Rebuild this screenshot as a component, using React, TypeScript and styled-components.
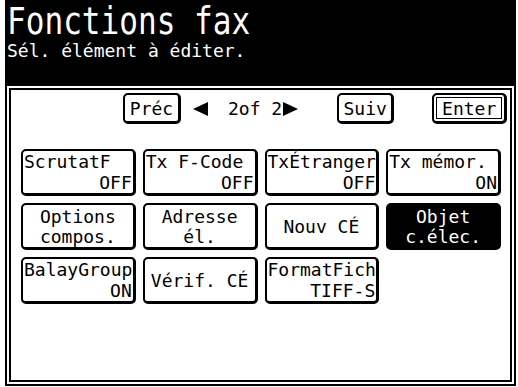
import styled, { createGlobalStyle } from 'styled-components';

const GlobalStyle = createGlobalStyle`
  html, body {
    margin: 0;
    padding: 0;
    background: #fff;
  }
  body {
    width: 518px;
    height: 387px;
    overflow: hidden;
    font-family: 'DejaVu Sans Mono', 'Liberation Mono', monospace;
    color: #000;
  }
`;

const Page = styled.div`
  width: 518px;
  height: 387px;
  padding: 0 2px 1px 5px;
  box-sizing: border-box;
`;

const Screen = styled.div`
  height: 386px;
  border: 2px solid #000;
  border-top: none;
  display: flex;
  flex-direction: column;
  box-sizing: border-box;
  background: #fff;
`;

const Header = styled.header`
  background: #000;
  color: #fff;
  height: 86px;
  padding: 7px 0 0 0;
  box-sizing: border-box;
  overflow: hidden;
`;

const Title = styled.div`
  font-size: 37px;
  line-height: 30px;
  white-space: nowrap;
  transform: scaleX(0.84);
  transform-origin: left center;
`;

const Subtitle = styled.div`
  font-size: 18px;
  line-height: 20px;
  margin-top: 4px;
  white-space: nowrap;
`;

const Panel = styled.section`
  flex: 1;
  margin: 2px;
  border: 2px solid #000;
  display: flex;
  flex-direction: column;
  box-sizing: border-box;
`;

const NavRow = styled.div`
  display: flex;
  align-items: center;
  height: 31px;
  margin-top: 3px;
  padding-left: 112px;
`;

const NavButton = styled.div<{ $double?: boolean; $gap?: number; $w: number }>`
  width: ${(p) => p.$w}px;
  height: 100%;
  margin-left: ${(p) => p.$gap ?? 0}px;
  box-sizing: border-box;
  display: flex;
  align-items: center;
  justify-content: center;
  font-size: 18px;
  border: 2px solid #000;
  border-right-width: 3px;
  border-bottom-width: 3px;
  border-radius: 5px;
  box-shadow: ${(p) =>
    p.$double ? 'inset 0 0 0 2px #fff, inset 0 0 0 3px #000' : 'none'};
`;

const PageInfo = styled.span<{ $gap: number }>`
  margin-left: ${(p) => p.$gap}px;
  font-size: 18px;
  white-space: pre;
  display: flex;
  align-items: center;
`;

const Arrow = styled.svg<{ $gap?: number }>`
  margin-left: ${(p) => p.$gap ?? 0}px;
  display: block;
`;

const Grid = styled.div`
  display: grid;
  grid-template-columns: repeat(4, 1fr);
  grid-auto-rows: 47px;
  column-gap: 7px;
  row-gap: 7px;
  margin-top: 25px;
  padding: 0 9px 0 10px;
`;

const Key = styled.div<{ $active?: boolean; $center?: boolean }>`
  box-sizing: border-box;
  border: 2px solid #000;
  border-right-width: 3px;
  border-bottom-width: 3px;
  border-radius: 5px;
  background: ${(p) => (p.$active ? '#000' : '#fff')};
  color: ${(p) => (p.$active ? '#fff' : '#000')};
  font-size: 18px;
  line-height: 20px;
  padding: 1px 1px 0 1px;
  display: flex;
  flex-direction: column;
  justify-content: ${(p) => (p.$center ? 'center' : 'space-between')};
  text-align: ${(p) => (p.$center ? 'center' : 'left')};
  white-space: nowrap;
  overflow: hidden;
`;

const Value = styled.span`
  text-align: right;
`;

type Item =
  | { kind: 'split'; label: string; value: string }
  | { kind: 'center'; lines: string[]; active?: boolean }
  | { kind: 'empty' };

const items: Item[] = [
  { kind: 'split', label: 'ScrutatF', value: 'OFF' },
  { kind: 'split', label: 'Tx F-Code', value: 'OFF' },
  { kind: 'split', label: 'TxÉtranger', value: 'OFF' },
  { kind: 'split', label: 'Tx mémor.', value: 'ON' },
  { kind: 'center', lines: ['Options', 'compos.'] },
  { kind: 'center', lines: ['Adresse', 'él.'] },
  { kind: 'center', lines: ['Nouv CÉ'] },
  { kind: 'center', lines: ['Objet', 'c.élec.'], active: true },
  { kind: 'split', label: 'BalayGroup', value: 'ON' },
  { kind: 'center', lines: ['Vérif. CÉ'] },
  { kind: 'split', label: 'FormatFich', value: 'TIFF-S' },
  { kind: 'empty' },
];

function App() {
  return (
    <Page>
      <GlobalStyle />
      <Screen>
        <Header>
          <Title>Fonctions fax</Title>
          <Subtitle>Sél. élément à éditer.</Subtitle>
        </Header>
        <Panel>
          <NavRow>
            <NavButton $w={58}>Préc</NavButton>
            <Arrow $gap={12} width="15" height="14" viewBox="0 0 15 14">
              <polygon points="0,7 15,0 15,14" fill="#000" />
            </Arrow>
            <PageInfo $gap={20}>
              2of 2
              <Arrow width="16" height="14" viewBox="0 0 16 14">
                <polygon points="1,0 16,7 1,14" fill="#000" />
              </Arrow>
            </PageInfo>
            <NavButton $w={57} $gap={39}>
              Suiv
            </NavButton>
            <NavButton $w={75} $gap={38} $double>
              Enter
            </NavButton>
          </NavRow>
          <Grid>
            {items.map((it, i) => {
              if (it.kind === 'empty') return <div key={i} />;
              if (it.kind === 'split')
                return (
                  <Key key={i}>
                    <span>{it.label}</span>
                    <Value>{it.value}</Value>
                  </Key>
                );
              return (
                <Key key={i} $center $active={it.active}>
                  {it.lines.map((l) => (
                    <span key={l}>{l}</span>
                  ))}
                </Key>
              );
            })}
          </Grid>
        </Panel>
      </Screen>
    </Page>
  );
}

export default App;
